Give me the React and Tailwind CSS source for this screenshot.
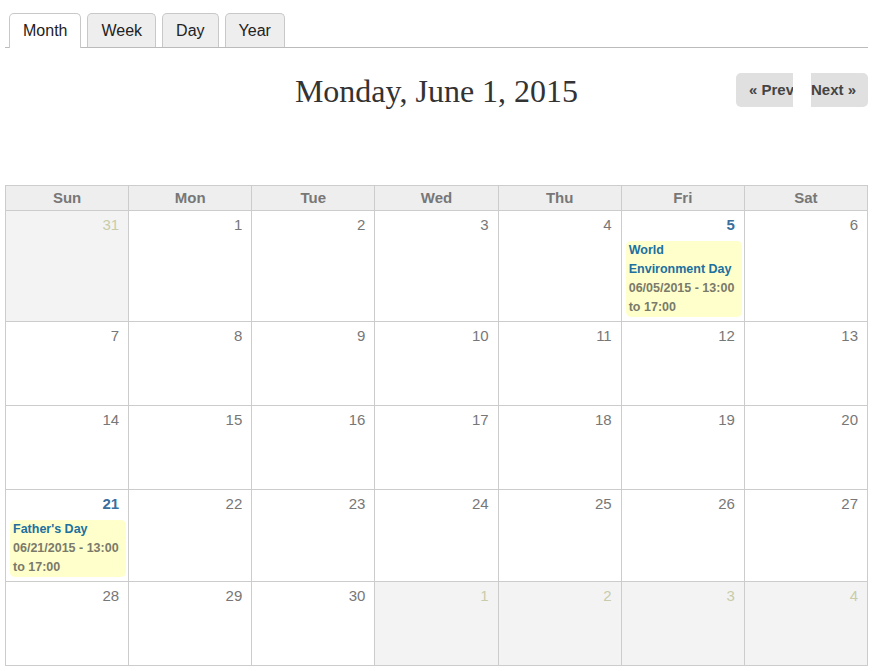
import React from 'react'

const DAYS = ['Sun', 'Mon', 'Tue', 'Wed', 'Thu', 'Fri', 'Sat']

const EVENTS = {
  5: { title: 'World Environment Day', time: '06/05/2015 - 13:00 to 17:00' },
  21: { title: "Father's Day", time: '06/21/2015 - 13:00 to 17:00' },
}

// weeks of June 2015, other-month days flagged
const WEEKS = [
  [[31, 1], [1], [2], [3], [4], [5], [6]],
  [[7], [8], [9], [10], [11], [12], [13]],
  [[14], [15], [16], [17], [18], [19], [20]],
  [[21], [22], [23], [24], [25], [26], [27]],
  [[28], [29], [30], [1, 1], [2, 1], [3, 1], [4, 1]],
]

function Cell({ day, other }) {
  const ev = !other && EVENTS[day]
  return (
    <td className={`align-top border border-[#cccccc] p-0 ${other ? 'bg-[#f3f3f3]' : 'bg-white'}`}>
      <div className="flex flex-col pl-[4px] pr-[2px] pt-[5px] pb-[4px] min-h-[83px]">
        <div className={`text-right pr-[7px] text-[15px] leading-[18px] ${other ? 'text-[#c8cca8]' : ev ? 'text-[#3a6e9c] font-bold' : 'text-[#777777]'}`}>
          {day}
        </div>
        {ev && (
          <div className="mt-[7px] bg-[#ffffcc] rounded-[5px] px-[3px] text-[12.5px] leading-[19px] font-bold">
            <div className="text-[#20709f]">{ev.title}</div>
            <div className="text-[#7a7a6a]">{ev.time}</div>
          </div>
        )}
      </div>
    </td>
  )
}

export default function App() {
  return (
    <div className="bg-white w-[874px] h-[671px] px-[5px] pt-[13px] font-['Liberation_Sans',Arial,sans-serif]">
      {/* Tabs */}
      <div className="flex items-end gap-[6px] pl-[4px] border-b border-[#bbbbbb] w-[863px]">
        <button className="h-[35px] px-[13px] -mb-px bg-white border border-b-0 border-[#c8c8c8] rounded-t-[5px] text-[16px] text-[#222]">Month</button>
        <button className="h-[34px] px-[13px] bg-[#eeeeee] border border-b-0 border-[#c8c8c8] rounded-t-[5px] text-[16px] text-[#222]">Week</button>
        <button className="h-[34px] px-[13px] bg-[#eeeeee] border border-b-0 border-[#c8c8c8] rounded-t-[5px] text-[16px] text-[#222]">Day</button>
        <button className="h-[34px] px-[13px] bg-[#eeeeee] border border-b-0 border-[#c8c8c8] rounded-t-[5px] text-[16px] text-[#222]">Year</button>
      </div>

      {/* Title + pager */}
      <div className="relative h-[137px] w-[863px]">
        <h1 className="text-center pt-[23px] text-[32px] leading-[40px] text-[#333333] font-['Liberation_Serif',Georgia,serif]">
          Monday, June 1, 2015
        </h1>
        <div className="absolute right-0 top-[25px] flex gap-[18px]">
          <button className="h-[34px] w-[57px] overflow-hidden whitespace-nowrap bg-[#e0e0e0] rounded-l-[5px] text-[15px] font-bold text-[#444] text-left pl-[13px]">« Prev</button>
          <button className="h-[34px] w-[57px] overflow-hidden whitespace-nowrap bg-[#e0e0e0] rounded-r-[5px] text-[15px] font-bold text-[#444] text-left">Next »</button>
        </div>
      </div>

      {/* Month grid */}
      <table className="border-collapse table-fixed w-[863px]">
        <thead>
          <tr>
            {DAYS.map(d => (
              <th key={d} className="h-[25px] border border-[#cccccc] bg-[#eeeeee] text-[15px] font-bold text-[#777777] p-0">{d}</th>
            ))}
          </tr>
        </thead>
        <tbody>
          {WEEKS.map((w, i) => (
            <tr key={i}>
              {w.map(([d, o], j) => <Cell key={j} day={d} other={!!o} />)}
            </tr>
          ))}
        </tbody>
      </table>
    </div>
  )
}
